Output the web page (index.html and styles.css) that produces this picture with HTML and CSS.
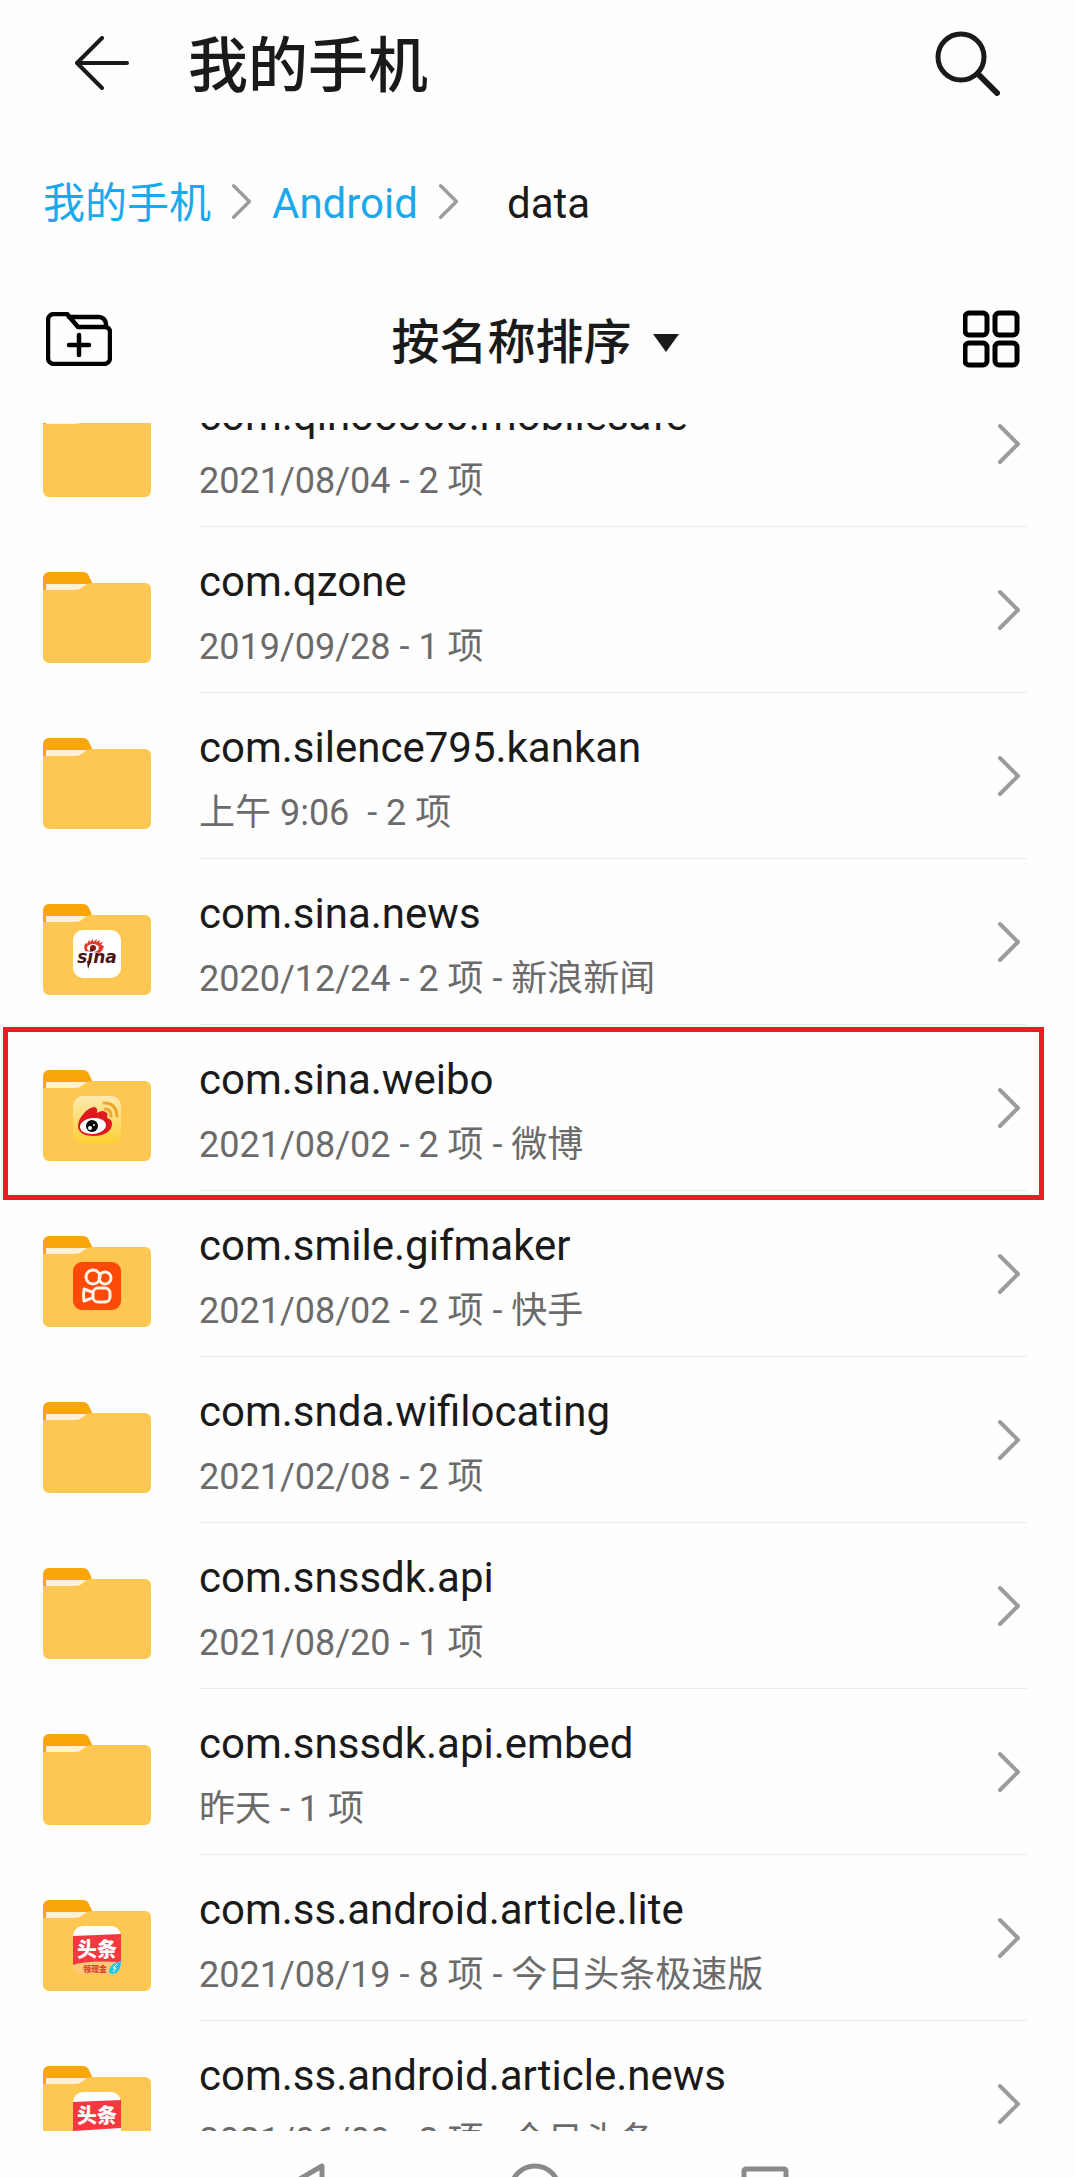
FILE: index.html
```html
<!DOCTYPE html>
<html lang="zh-CN">

<head>
    <meta charset="UTF-8">
    <meta name="viewport" content="width=device-width, initial-scale=1.0">
    <title>我的手机</title>
    <link rel="stylesheet" href="styles.css">
</head>

<body>
    <!-- shared shapes -->
    <svg class="defs" aria-hidden="true">
        <defs>
            <linearGradient id="weibo-bg" x1="0" y1="0" x2="0" y2="1">
                <stop offset="0" stop-color="#fdeab0" />
                <stop offset="1" stop-color="#fdd032" />
            </linearGradient>
            <symbol id="folder" viewBox="0 0 108 91">
                <path d="M0 20V6a6 6 0 0 1 6-6h34q4 0 6 4l4 9v7z" fill="#f9a60a" />
                <path d="M3 12h46l-8 8H3z" fill="#fef1d6" />
                <path d="M0 18h33q4 0 7-3 4-4 9-4h53a6 6 0 0 1 6 6v68a6 6 0 0 1-6 6H6a6 6 0 0 1-6-6z" fill="#fec751" />
            </symbol>
            <symbol id="chevron" viewBox="0 0 24 42">
                <path d="M3 3l18 18L3 39" fill="none" stroke="#9c9c9c" stroke-width="4" stroke-linecap="round" stroke-linejoin="round" />
            </symbol>
            <symbol id="toutiao" viewBox="0 0 48 48">
                <rect width="48" height="48" rx="10" fill="#fff" />
                <path d="M0 10l48-2v28L0 39z" fill="#f5373f" />
                <text x="24" y="31" class="toutiao-text">头条</text>
            </symbol>
        </defs>
    </svg>

    <header class="header">
        <button class="icon-btn" type="button" aria-label="返回">
            <svg width="54" height="54" viewBox="0 0 54 54" fill="none" stroke="#1a1a1a" stroke-width="4" stroke-linecap="round" stroke-linejoin="round">
                <path d="M27 2L2 27l25 25M2 27h50" />
            </svg>
        </button>
        <h1>我的手机</h1>
        <button class="icon-btn" type="button" aria-label="搜索">
            <svg width="65" height="65" viewBox="0 0 65 65" fill="none" stroke="#1a1a1a" stroke-linecap="round">
                <circle cx="26" cy="26" r="23" stroke-width="5" />
                <path d="M43 43l19 19" stroke-width="6" />
            </svg>
        </button>
    </header>

    <nav class="breadcrumb">
        <a href="#">我的手机</a>
        <svg width="21" height="37"><use href="#chevron" /></svg>
        <a href="#">Android</a>
        <svg width="21" height="37"><use href="#chevron" /></svg>
        <span class="current">data</span>
    </nav>

    <div class="toolbar">
        <button class="icon-btn" type="button" aria-label="新建文件夹">
            <svg width="66" height="54" viewBox="0 0 66 54" fill="none" stroke="#000" stroke-width="4.500" stroke-linecap="round" stroke-linejoin="round">
                <path d="M21 2H8a6 6 0 0 0-6 6v38a6 6 0 0 0 6 6h50a6 6 0 0 0 6-6V20a5 5 0 0 0-5-5H32z" />
                <path d="M23 5h30a7 7 0 0 1 7 7v3" />
                <path d="M33 23v20M23 33h20" />
            </svg>
        </button>
        <div class="sort">
            <select aria-label="排序方式">
                <option>按名称排序</option>
            </select>
            <svg width="31" height="18" viewBox="0 0 31 18"><path d="M0 0h26L13 18z" fill="#1a1a1a" /></svg>
        </div>
        <button class="icon-btn" type="button" aria-label="网格视图">
            <svg width="66" height="58" viewBox="0 0 66 58" fill="none" stroke="#000" stroke-width="5">
                <rect x="2" y="3" width="22" height="22" rx="4" />
                <rect x="32" y="3" width="22" height="22" rx="4" />
                <rect x="2" y="33" width="22" height="22" rx="4" />
                <rect x="32" y="33" width="22" height="22" rx="4" />
            </svg>
        </button>
    </div>

    <main class="list">
        <ul>
            <li>
                <a class="row" href="#">
                    <span class="folder"><svg><use href="#folder" /></svg></span>
                    <span class="info">
                        <span class="name">com.qihoo360.mobilesafe</span>
                        <span class="meta">2021/08/04 - 2 项</span>
                    </span>
                    <svg class="arrow"><use href="#chevron" /></svg>
                </a>
            </li>
            <li>
                <a class="row" href="#">
                    <span class="folder"><svg><use href="#folder" /></svg></span>
                    <span class="info">
                        <span class="name">com.qzone</span>
                        <span class="meta">2019/09/28 - 1 项</span>
                    </span>
                    <svg class="arrow"><use href="#chevron" /></svg>
                </a>
            </li>
            <li>
                <a class="row" href="#">
                    <span class="folder"><svg><use href="#folder" /></svg></span>
                    <span class="info">
                        <span class="name">com.silence795.kankan</span>
                        <span class="meta">上午 9:06&nbsp; - 2 项</span>
                    </span>
                    <svg class="arrow"><use href="#chevron" /></svg>
                </a>
            </li>
            <li>
                <a class="row" href="#">
                    <span class="folder">
                        <svg><use href="#folder" /></svg>
                        <svg class="app" viewBox="0 0 48 48">
                            <rect width="48" height="48" rx="10" fill="#fff" />
                            <path d="M12 21q-2-6 1-8l1 1 2-4 1 2 3-3v3l4-3-1 3 4-2-1 3 4-1-2 3 3 1q-1 4-4 7z" fill="#e1392b" />
                            <ellipse cx="20" cy="18" rx="6" ry="4" fill="#fff" />
                            <circle cx="20" cy="18" r="3" fill="#8d1d16" />
                            <text x="24" y="33" class="sina-text">sina</text>
                            <path d="M14 31h4l-3 8z" fill="#4a1414" />
                        </svg>
                    </span>
                    <span class="info">
                        <span class="name">com.sina.news</span>
                        <span class="meta">2020/12/24 - 2 项 - 新浪新闻</span>
                    </span>
                    <svg class="arrow"><use href="#chevron" /></svg>
                </a>
            </li>
            <li class="highlight">
                <a class="row" href="#">
                    <span class="folder">
                        <svg><use href="#folder" /></svg>
                        <svg class="app" viewBox="0 0 48 48">
                            <rect width="48" height="48" rx="10" fill="url(#weibo-bg)" />
                            <path d="M5 30C5 22 14 12 21 11q4 0 3 6 6-4 10 0 1 2 0 5 5 1 5 6C39 36 30 40 21 40S5 37 5 30z" fill="#dd1a20" />
                            <ellipse cx="20" cy="30" rx="13" ry="8" fill="#fff" transform="rotate(-6 20 30)" />
                            <circle cx="19" cy="30" r="6" fill="#080808" />
                            <circle cx="17" cy="32" r="2" fill="#fff" />
                            <circle cx="21" cy="29" r="1" fill="#fff" />
                            <path d="M31 7q12 0 13 13M32 13q6 0 6 7" fill="none" stroke="#f0a532" stroke-width="3" stroke-linecap="round" />
                        </svg>
                    </span>
                    <span class="info">
                        <span class="name">com.sina.weibo</span>
                        <span class="meta">2021/08/02 - 2 项 - 微博</span>
                    </span>
                    <svg class="arrow"><use href="#chevron" /></svg>
                </a>
            </li>
            <li>
                <a class="row" href="#">
                    <span class="folder">
                        <svg><use href="#folder" /></svg>
                        <svg class="app" viewBox="0 0 48 48">
                            <rect width="48" height="48" rx="9" fill="#fd4a08" />
                            <g fill="none" stroke="#fff3e6" stroke-width="3" stroke-linejoin="round">
                                <circle cx="20" cy="15" r="7" />
                                <circle cx="32" cy="16" r="6" />
                                <rect x="20" y="26" width="17" height="14" rx="5" />
                                <path d="M19 30l-8-3q-1 6 0 12l8-3" />
                            </g>
                        </svg>
                    </span>
                    <span class="info">
                        <span class="name">com.smile.gifmaker</span>
                        <span class="meta">2021/08/02 - 2 项 - 快手</span>
                    </span>
                    <svg class="arrow"><use href="#chevron" /></svg>
                </a>
            </li>
            <li>
                <a class="row" href="#">
                    <span class="folder"><svg><use href="#folder" /></svg></span>
                    <span class="info">
                        <span class="name">com.snda.wifilocating</span>
                        <span class="meta">2021/02/08 - 2 项</span>
                    </span>
                    <svg class="arrow"><use href="#chevron" /></svg>
                </a>
            </li>
            <li>
                <a class="row" href="#">
                    <span class="folder"><svg><use href="#folder" /></svg></span>
                    <span class="info">
                        <span class="name">com.snssdk.api</span>
                        <span class="meta">2021/08/20 - 1 项</span>
                    </span>
                    <svg class="arrow"><use href="#chevron" /></svg>
                </a>
            </li>
            <li>
                <a class="row" href="#">
                    <span class="folder"><svg><use href="#folder" /></svg></span>
                    <span class="info">
                        <span class="name">com.snssdk.api.embed</span>
                        <span class="meta">昨天 - 1 项</span>
                    </span>
                    <svg class="arrow"><use href="#chevron" /></svg>
                </a>
            </li>
            <li>
                <a class="row" href="#">
                    <span class="folder">
                        <svg><use href="#folder" /></svg>
                        <svg class="app" viewBox="0 0 48 48">
                            <use href="#toutiao" />
                            <path d="M0 39q12-5 48-3v2a10 10 0 0 1-10 10H10Q1 48 0 39z" fill="#fdc878" />
                            <text x="22" y="46" class="cash-text">领现金</text>
                            <path d="M36 47q0-10 12-12 0 12-8 13z" fill="#1cc8e8" />
                            <path d="M44 38l-4 4h3l-3 4" fill="none" stroke="#fff" />
                        </svg>
                    </span>
                    <span class="info">
                        <span class="name">com.ss.android.article.lite</span>
                        <span class="meta">2021/08/19 - 8 项 - 今日头条极速版</span>
                    </span>
                    <svg class="arrow"><use href="#chevron" /></svg>
                </a>
            </li>
            <li>
                <a class="row" href="#">
                    <span class="folder">
                        <svg><use href="#folder" /></svg>
                        <svg class="app" viewBox="0 0 48 48"><use href="#toutiao" /></svg>
                    </span>
                    <span class="info">
                        <span class="name">com.ss.android.article.news</span>
                        <span class="meta">2021/06/09 - 2 项 - 今日头条</span>
                    </span>
                    <svg class="arrow"><use href="#chevron" /></svg>
                </a>
            </li>
        </ul>
    </main>

    <footer class="system-nav">
        <button class="icon-btn" type="button" aria-label="后退">
            <svg width="54" height="54" viewBox="0 0 54 54"><path d="M44 3v48L3 27z" /></svg>
        </button>
        <button class="icon-btn" type="button" aria-label="主页">
            <svg width="54" height="54" viewBox="0 0 54 54"><circle cx="27" cy="27" r="24" /></svg>
        </button>
        <button class="icon-btn" type="button" aria-label="最近任务">
            <svg width="54" height="54" viewBox="0 0 54 54"><rect x="6" y="6" width="42" height="42" rx="2" /></svg>
        </button>
    </footer>
</body>

</html>
```
FILE: styles.css
```css
* {
    box-sizing: border-box;
}

body {
    margin: 0;
    height: 100vh;
    display: flex;
    flex-direction: column;
    overflow: hidden;
    background-color: #fefefe;
    color: #1a1a1a;
    font-family: Roboto, "Noto Sans CJK SC", sans-serif;
}

a {
    color: inherit;
    text-decoration: none;
}

svg {
    display: block;
    flex-shrink: 0;
}

.defs {
    position: absolute;
    width: 0;
    height: 0;
}

.icon-btn {
    padding: 0;
    border: none;
    background: none;
    cursor: pointer;
}

.header {
    display: flex;
    align-items: center;
    flex-shrink: 0;
    height: 126px;
    padding: 0 75px;
}

.header h1 {
    flex: 1;
    margin: 0 0 0 59px;
    padding-top: 8px;
    font-size: 60px;
    font-weight: 500;
    line-height: 72px;
}

.breadcrumb {
    display: flex;
    align-items: center;
    flex-shrink: 0;
    gap: 20px;
    height: 150px;
    padding: 0 43px;
    font-size: 42px;
    line-height: 60px;
}

.breadcrumb a,
.breadcrumb span {
    padding-top: 6px;
}

.breadcrumb a {
    color: #1ba9ec;
}

.breadcrumb .current {
    margin-left: 28px;
}

.toolbar {
    display: flex;
    align-items: center;
    justify-content: space-between;
    flex-shrink: 0;
    height: 147px;
    padding: 0 46px 22px;
}

.sort {
    display: flex;
    align-items: center;
    gap: 20px;
    padding-top: 8px;
}

.sort select {
    appearance: none;
    padding: 0;
    border: none;
    background: none;
    color: inherit;
    font-family: inherit;
    font-size: 48px;
    font-weight: 500;
    line-height: 72px;
}

/* list is scrolled part way into the first row */
.list {
    flex: 1;
    min-height: 0;
    overflow: hidden;
}

.list ul {
    margin: -62px 0 0;
    padding: 0;
    list-style: none;
}

.row {
    display: flex;
    height: 166px;
    padding: 0 48px 0 43px;
}

.folder {
    position: relative;
    width: 108px;
    height: 91px;
    margin: 45px 48px 0 0;
}

.folder svg {
    width: 108px;
    height: 91px;
}

.folder .app {
    position: absolute;
    top: 26px;
    left: 30px;
    width: 48px;
    height: 48px;
}

.info {
    flex: 1;
    padding-top: 24px;
    border-bottom: 1px solid #ececec;
}

.name,
.meta {
    display: block;
    white-space: nowrap;
}

.name {
    font-size: 42px;
    line-height: 62px;
}

.meta {
    color: #6b6b6b;
    font-size: 36px;
    line-height: 68px;
}

.arrow {
    width: 24px;
    height: 42px;
    margin: 62px 6px 0 -30px;
}

.highlight {
    position: relative;
}

.highlight::after {
    content: "";
    position: absolute;
    top: 2px;
    right: 31px;
    bottom: -9px;
    left: 3px;
    border: 5px solid #ec1c24;
    pointer-events: none;
}

.toutiao-text,
.cash-text,
.sina-text {
    text-anchor: middle;
    font-family: "Noto Sans CJK SC", sans-serif;
    font-weight: 900;
}

.toutiao-text {
    fill: #fff;
    font-size: 20px;
}

.cash-text {
    fill: #d8432a;
    font-size: 8px;
}

.sina-text {
    fill: #4a1414;
    font-family: "DejaVu Sans", sans-serif;
    font-size: 17px;
    font-style: italic;
    font-weight: 700;
}

/* system bar, icons run off the bottom of the screen */
.system-nav {
    display: flex;
    justify-content: center;
    align-items: flex-start;
    flex-shrink: 0;
    gap: 176px;
    height: 46px;
    padding: 32px 6px 0 0;
    overflow: hidden;
}

.system-nav svg {
    fill: none;
    stroke: #8a8a8a;
    stroke-width: 5;
    stroke-linejoin: round;
}
```
